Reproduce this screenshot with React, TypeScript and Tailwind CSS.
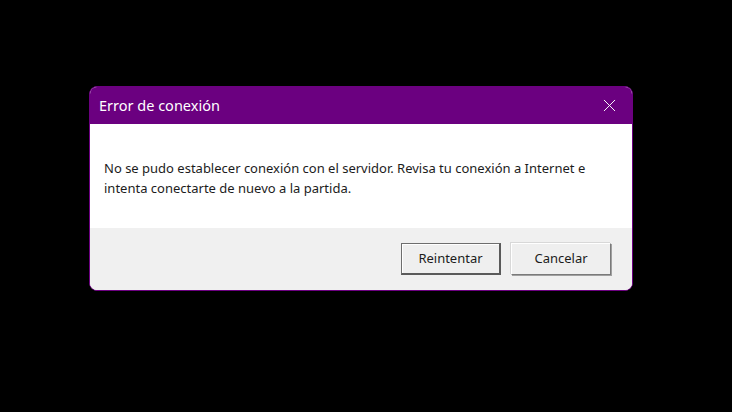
import { X } from 'lucide-react';

export default function App() {
  return (
    <div className="w-[732px] h-[412px] bg-black flex items-start justify-start" style={{ fontFamily: '"Noto Sans", "Open Sans", sans-serif' }}>
      <div className="mt-[86px] ml-[89px] w-[544px] rounded-[8px] overflow-hidden border border-[#6b0080] bg-white">
        {/* Title bar */}
        <div className="h-[37px] bg-[#6b0080] flex items-center justify-between pl-[9px] pr-[12px]">
          <span className="text-white text-[14.5px] leading-none">Error de conexión</span>
          <X className="w-[21px] h-[21px] text-white" strokeWidth={1.1} />
        </div>

        {/* Message */}
        <div className="h-[104px] bg-white pt-[34px] px-[14px]">
          <p className="text-[13px] leading-[20px] text-[#1c1c1c]">
            No se pudo establecer conexión con el servidor. Revisa tu conexión a Internet e
            <br />
            intenta conectarte de nuevo a la partida.
          </p>
        </div>

        {/* Footer */}
        <div className="h-[62px] bg-[#f0f0f0] flex items-center justify-end gap-[10px] pr-[21px]">
          <button className="w-[100px] h-[32px] bg-[#efefef] border border-[#6e6e6e] border-b-2 border-r-2 border-b-[#5a5a5a] border-r-[#5a5a5a] shadow-[inset_1px_1px_0_#fff] text-[13px] text-[#1c1c1c]">
            Reintentar
          </button>
          <button className="w-[100px] h-[32px] bg-[#efefef] border border-t-white border-l-white border-b-[#7a7a7a] border-r-[#7a7a7a] shadow-[1px_1px_0_#a0a0a0,-1px_-1px_0_#d8d8d8] text-[13px] text-[#1c1c1c]">
            Cancelar
          </button>
        </div>
      </div>
    </div>
  );
}
